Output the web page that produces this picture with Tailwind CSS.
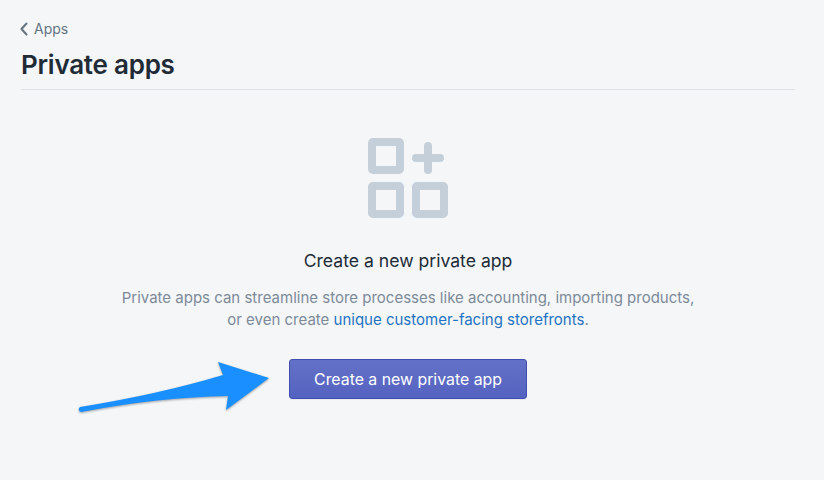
<!DOCTYPE html>
<html lang="en">
<head>
<meta charset="utf-8">
<title>Private apps</title>
<script src="https://cdn.jsdelivr.net/npm/@tailwindcss/browser@4"></script>
</head>
<body class="bg-[#f4f6f8] font-['Inter','Noto_Sans',sans-serif] overflow-hidden">
<div class="relative w-[824px] h-[480px]">
  <div class="ml-[21px] w-[774px] pt-[20px] h-[90px] border-b border-[#dfe3e8]">
    <a class="flex items-center h-[18px] text-[14px] leading-[18px] text-[#637381]">
      <svg class="w-[8px] h-[14px] mr-[6px] -ml-px" viewBox="0 0 8 14" fill="none" stroke="#637381" stroke-width="2" stroke-linecap="round" stroke-linejoin="round"><path d="M6.5 1.5 1.5 7l5 5.500"/></svg>
      <span>Apps</span>
    </a>
    <h1 class="mt-[11px] text-[26px] leading-[32px] font-semibold text-[#212b36] tracking-[-0.25px]">Private apps</h1>
  </div>
  <div class="flex flex-col items-center pt-[48px]">
    <svg class="w-[80px] h-[80px] ml-[-8px]" viewBox="0 0 80 80" fill="none">
      <rect x="4" y="4" width="28" height="28" rx="1" stroke="#c4cfd9" stroke-width="8"/>
      <rect x="4" y="48" width="28" height="28" rx="1" stroke="#c4cfd9" stroke-width="8"/>
      <rect x="48" y="48" width="28" height="28" rx="1" stroke="#c4cfd9" stroke-width="8"/>
      <path d="M48 20h24M60 8v24" stroke="#c4cfd9" stroke-width="8" stroke-linecap="round"/>
    </svg>
    <h2 class="mt-[31px] ml-[-8px] text-[17.6px] leading-[24px] text-[#212b36]">Create a new private app</h2>
    <p class="mt-[14px] ml-[-8px] text-center text-[15px] leading-[22px] text-[#7c8a98]">Private apps can streamline store processes like accounting, importing products,<br>or even create <a class="text-[#1f73c2]">unique customer-facing storefronts</a>.</p>
    <button class="mt-[28px] ml-[-8px] w-[238px] h-[40px] pt-[2px] rounded-[3px] border border-[#3f4eae] bg-gradient-to-b from-[#6371c7] to-[#5563c1] text-white text-[15.85px] leading-[20px] shadow-[0_1px_0_rgba(22,29,37,0.05)]">Create a new private app</button>
  </div>
  <svg class="absolute left-[70px] top-[355px] w-[210px] h-[65px] drop-shadow-[0_1px_1px_rgba(0,0,0,0.35)]" viewBox="70 355 210 65">
    <path d="M80 407Q160 394 223 375L218 362 269 378 226 410 228 396Q160 397 81 412 77 410 80 407Z" fill="#1a8fff"/>
  </svg>
</div>
</body>
</html>
